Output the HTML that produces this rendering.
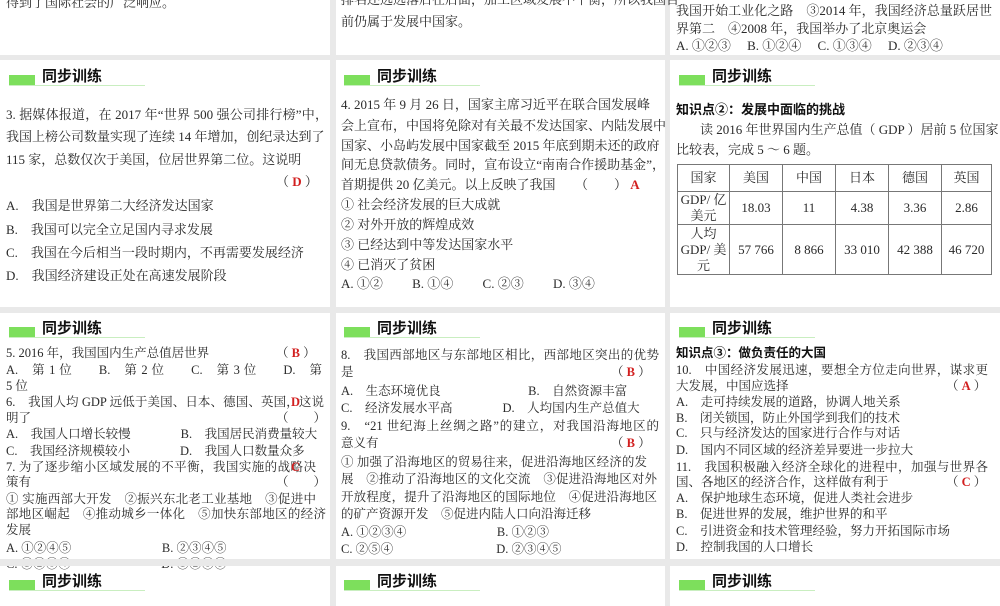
<!DOCTYPE html>
<html><head><meta charset="utf-8"><style>
body{margin:0;width:1000px;height:600px;background:#e9e9e9;position:relative;overflow:hidden;font-family:"Liberation Serif","Noto Serif CJK SC",serif;color:#2a2a2a}
.p{position:absolute;background:#fff}
.l{position:absolute;white-space:nowrap;font-size:13px;line-height:18px}
.s{font-size:12.5px}
.j{text-align:justify;text-align-last:justify}
.h{position:absolute}
.h .b{position:absolute;left:0;top:0;width:26px;height:10px;background:#7ddf5c}
.h .u{position:absolute;left:0;top:10px;width:136px;height:1px;background:#c9eec0}
.h .t{position:absolute;left:33px;top:-7px;font:bold 15px "Liberation Sans","Noto Sans CJK SC",sans-serif;color:#111;white-space:nowrap;line-height:18px}
.r{color:#d21f1f;font-family:"Liberation Serif",serif;font-weight:bold}
.k{font-weight:bold;font-family:"Liberation Sans","Noto Sans CJK SC",sans-serif;color:#111}
table{position:absolute;border-collapse:collapse;font-size:13px;line-height:16px}
td{border:1px solid #777;text-align:center;padding:0}
</style></head><body>
<div class="p" style="left:0;top:0;width:330px;height:55px"></div>
<div class="p" style="left:336px;top:0;width:329px;height:55px"></div>
<div class="p" style="left:670px;top:0;width:330px;height:55px"></div>
<div class="p" style="left:0;top:60px;width:330px;height:247px"></div>
<div class="p" style="left:336px;top:60px;width:329px;height:247px"></div>
<div class="p" style="left:670px;top:60px;width:330px;height:247px"></div>
<div class="p" style="left:0;top:313px;width:330px;height:246px"></div>
<div class="p" style="left:336px;top:313px;width:329px;height:246px"></div>
<div class="p" style="left:670px;top:313px;width:330px;height:246px"></div>
<div class="p" style="left:0;top:566px;width:330px;height:40px"></div>
<div class="p" style="left:336px;top:566px;width:329px;height:40px"></div>
<div class="p" style="left:670px;top:566px;width:330px;height:40px"></div>

<!-- row1 -->
<div class="l" style="left:6px;top:-6px">得到了国际社会的广泛响应。</div>
<div class="l j" style="left:341px;top:-9px;width:318px">排名还远远落后在后面，加工区域发展不平衡，所以我国目</div>
<div class="l" style="left:341px;top:13px">前仍属于发展中国家。</div>
<div class="l j" style="left:676px;top:2px;width:316px">我国开始工业化之路　③2014 年，我国经济总量跃居世</div>
<div class="l" style="left:676px;top:20px">界第二　④2008 年，我国举办了北京奥运会</div>
<div class="l" style="left:676px;top:37px">A. ①②③　 B. ①②④　 C. ①③④　 D. ②③④</div>

<!-- headers -->
<div class="h" style="left:9px;top:75px"><div class="b"></div><div class="u"></div><div class="t">同步训练</div></div>
<div class="h" style="left:344px;top:75px"><div class="b"></div><div class="u"></div><div class="t">同步训练</div></div>
<div class="h" style="left:679px;top:75px"><div class="b"></div><div class="u"></div><div class="t">同步训练</div></div>
<div class="h" style="left:9px;top:327px"><div class="b"></div><div class="u"></div><div class="t">同步训练</div></div>
<div class="h" style="left:344px;top:327px"><div class="b"></div><div class="u"></div><div class="t">同步训练</div></div>
<div class="h" style="left:679px;top:327px"><div class="b"></div><div class="u"></div><div class="t">同步训练</div></div>
<div class="h" style="left:9px;top:580px"><div class="b"></div><div class="u"></div><div class="t">同步训练</div></div>
<div class="h" style="left:344px;top:580px"><div class="b"></div><div class="u"></div><div class="t">同步训练</div></div>
<div class="h" style="left:679px;top:580px"><div class="b"></div><div class="u"></div><div class="t">同步训练</div></div>

<!-- row2 col1 -->
<div class="l j" style="left:6px;top:106px;width:322px">3. 据媒体报道，在 2017 年“世界 500 强公司排行榜”中，</div>
<div class="l j" style="left:6px;top:128px;width:312px">我国上榜公司数量实现了连续 14 年增加，创纪录达到了</div>
<div class="l" style="left:6px;top:151px">115 家，总数仅次于美国，位居世界第二位。这说明</div>
<div class="l" style="left:276px;top:173px">（ <span class="r">D</span> ）</div>
<div class="l" style="left:6px;top:197px">A.　我国是世界第二大经济发达国家</div>
<div class="l" style="left:6px;top:221px">B.　我国可以完全立足国内寻求发展</div>
<div class="l" style="left:6px;top:244px">C.　我国在今后相当一段时期内，不再需要发展经济</div>
<div class="l" style="left:6px;top:267px">D.　我国经济建设正处在高速发展阶段</div>

<!-- row2 col2 -->
<div class="l j" style="left:341px;top:96px;width:309px">4.  2015 年 9 月 26 日，国家主席习近平在联合国发展峰</div>
<div class="l j" style="left:341px;top:117px;width:318px">会上宣布，中国将免除对有关最不发达国家、内陆发展中</div>
<div class="l j" style="left:341px;top:137px;width:310px">国家、小岛屿发展中国家截至 2015 年底到期未还的政府</div>
<div class="l j" style="left:341px;top:156px;width:324px">间无息贷款债务。同时，宣布设立“南南合作援助基金”，</div>
<div class="l" style="left:341px;top:176px">首期提供 20 亿美元。以上反映了我国　　（　　） <span class="r">A</span></div>
<div class="l" style="left:341px;top:196px">① 社会经济发展的巨大成就</div>
<div class="l" style="left:341px;top:216px">② 对外开放的辉煌成效</div>
<div class="l" style="left:341px;top:236px">③ 已经达到中等发达国家水平</div>
<div class="l" style="left:341px;top:256px">④ 已消灭了贫困</div>
<div class="l" style="left:341px;top:275px">A. ①②　　 B. ①④　　 C. ②③　　 D. ③④</div>

<!-- row2 col3 -->
<div class="l k" style="left:676px;top:101px">知识点②：发展中面临的挑战</div>
<div class="l j" style="left:700px;top:121px;width:291px">读 2016 年世界国内生产总值（ GDP ）居前 5 位国家</div>
<div class="l" style="left:676px;top:141px">比较表，完成 5 ～ 6 题。</div>
<table style="left:677px;top:164px;width:315px;height:111px">
<tr style="height:27px"><td style="width:51px">国家</td><td style="width:52px">美国</td><td style="width:52px">中国</td><td style="width:52px">日本</td><td style="width:52px">德国</td><td>英国</td></tr>
<tr style="height:33px"><td>GDP/ 亿<br>美元</td><td>18.03</td><td>11</td><td>4.38</td><td>3.36</td><td>2.86</td></tr>
<tr><td>人均<br>GDP/ 美<br>元</td><td>57 766</td><td>8 866</td><td>33 010</td><td>42 388</td><td>46 720</td></tr>
</table>

<!-- row3 col1 -->
<div class="l s" style="left:6px;top:344px">5.  2016 年，我国国内生产总值居世界</div>
<div class="l s" style="left:276px;top:344px">（ <span class="r">B</span> ）</div>
<div class="l s j" style="left:6px;top:361px;width:316px">A.　第 1 位　　B.　第 2 位　　C.　第 3 位　　D.　第</div>
<div class="l s" style="left:6px;top:377px">5 位</div>
<div class="l s j" style="left:6px;top:393px;width:318px">6.　我国人均 GDP 远低于美国、日本、德国、英国，这说</div>
<div class="l s" style="left:291px;top:393px"><span class="r">D</span></div>
<div class="l s" style="left:6px;top:409px">明了</div>
<div class="l s" style="left:276px;top:409px">（　　）</div>
<div class="l s" style="left:6px;top:425px">A.　我国人口增长较慢　　　　B.　我国居民消费量较大</div>
<div class="l s" style="left:6px;top:442px">C.　我国经济规模较小　　　　D.　我国人口数量众多</div>
<div class="l s j" style="left:6px;top:458px;width:310px">7. 为了逐步缩小区域发展的不平衡，我国实施的战略决</div>
<div class="l s" style="left:291px;top:458px"><span class="r">C</span></div>
<div class="l s" style="left:6px;top:473px">策有</div>
<div class="l s" style="left:276px;top:473px">（　　）</div>
<div class="l s j" style="left:6px;top:490px;width:310px">① 实施西部大开发　②振兴东北老工业基地　③促进中</div>
<div class="l s j" style="left:6px;top:505px;width:320px">部地区崛起　④推动城乡一体化　⑤加快东部地区的经济</div>
<div class="l s" style="left:6px;top:521px">发展</div>
<div class="l s" style="left:6px;top:539px">A. ①②④⑤　　　　　　　 B. ②③④⑤</div>
<div class="l s" style="left:6px;top:555px">C. ①②③④　　　　　　　 D. ①②③⑤</div>
<div class="p" style="left:0;top:559px;width:330px;height:7px;background:#e9e9e9"></div>

<!-- row3 col2 -->
<div class="l s j" style="left:341px;top:346px;width:318px">8.　我国西部地区与东部地区相比，西部地区突出的优势</div>
<div class="l s" style="left:341px;top:363px">是</div>
<div class="l s" style="left:611px;top:363px">（ <span class="r">B</span> ）</div>
<div class="l s" style="left:341px;top:382px">A.　生态环境优良　　　　　　　B.　自然资源丰富</div>
<div class="l s" style="left:341px;top:399px">C.　经济发展水平高　　　　D.　人均国内生产总值大</div>
<div class="l s j" style="left:341px;top:417px;width:318px">9.　“21 世纪海上丝绸之路”的建立，对我国沿海地区的</div>
<div class="l s" style="left:341px;top:434px">意义有</div>
<div class="l s" style="left:611px;top:434px">（ <span class="r">B</span> ）</div>
<div class="l s j" style="left:341px;top:453px;width:306px">① 加强了沿海地区的贸易往来，促进沿海地区经济的发</div>
<div class="l s j" style="left:341px;top:470px;width:316px">展　②推动了沿海地区的文化交流　③促进沿海地区对外</div>
<div class="l s j" style="left:341px;top:488px;width:316px">开放程度，提升了沿海地区的国际地位　④促进沿海地区</div>
<div class="l s" style="left:341px;top:505px">的矿产资源开发　⑤促进内陆人口向沿海迁移</div>
<div class="l s" style="left:341px;top:523px">A. ①②③④　　　　　　　 B. ①②③</div>
<div class="l s" style="left:341px;top:540px">C. ②⑤④　　　　　　　　 D. ②③④⑤</div>

<!-- row3 col3 -->
<div class="l k s" style="left:676px;top:344px">知识点③：做负责任的大国</div>
<div class="l s j" style="left:676px;top:361px;width:312px">10.　中国经济发展迅速，要想全方位走向世界，谋求更</div>
<div class="l s" style="left:676px;top:377px">大发展，中国应选择</div>
<div class="l s" style="left:946px;top:377px">（ <span class="r">A</span> ）</div>
<div class="l s" style="left:676px;top:393px">A.　走可持续发展的道路，协调人地关系</div>
<div class="l s" style="left:676px;top:409px">B.　闭关锁国，防止外国学到我们的技术</div>
<div class="l s" style="left:676px;top:424px">C.　只与经济发达的国家进行合作与对话</div>
<div class="l s" style="left:676px;top:441px">D.　国内不同区域的经济差异要进一步拉大</div>
<div class="l s j" style="left:676px;top:458px;width:312px">11.　我国积极融入经济全球化的进程中，加强与世界各</div>
<div class="l s" style="left:676px;top:473px">国、各地区的经济合作，这样做有利于</div>
<div class="l s" style="left:946px;top:473px">（ <span class="r">C</span> ）</div>
<div class="l s" style="left:676px;top:489px">A.　保护地球生态环境，促进人类社会进步</div>
<div class="l s" style="left:676px;top:505px">B.　促进世界的发展，维护世界的和平</div>
<div class="l s" style="left:676px;top:522px">C.　引进资金和技术管理经验，努力开拓国际市场</div>
<div class="l s" style="left:676px;top:538px">D.　控制我国的人口增长</div>
</body></html>
